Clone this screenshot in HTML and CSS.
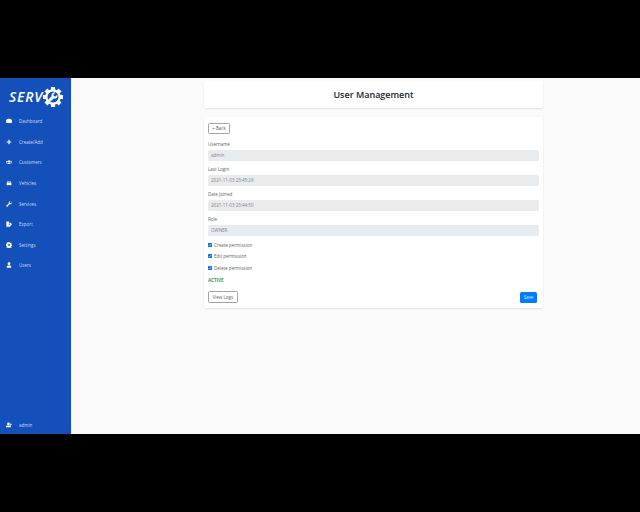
FILE: index.html
```html
<!DOCTYPE html>
<html lang="en">
<head>
<meta charset="utf-8">
<title>User Management</title>
<link rel="stylesheet" href="styles.css">
</head>
<body>
<div class="app">
  <aside class="sidebar">
    <div class="logo">
      <span class="logo-text">SERV</span>
      <svg class="logo-gear" viewBox="0 0 24 24" width="20" height="20">
        <g fill="#fff">
          <rect x="9.500" y="0" width="5" height="5"/>
          <rect x="9.500" y="0" width="5" height="5" transform="rotate(45 12 12)"/>
          <rect x="9.500" y="0" width="5" height="5" transform="rotate(90 12 12)"/>
          <rect x="9.500" y="0" width="5" height="5" transform="rotate(135 12 12)"/>
          <rect x="9.500" y="0" width="5" height="5" transform="rotate(180 12 12)"/>
          <rect x="9.500" y="0" width="5" height="5" transform="rotate(225 12 12)"/>
          <rect x="9.500" y="0" width="5" height="5" transform="rotate(270 12 12)"/>
          <rect x="9.500" y="0" width="5" height="5" transform="rotate(315 12 12)"/>
        </g>
        <circle cx="12" cy="12" r="8" fill="none" stroke="#fff" stroke-width="2.600"/>
        <path fill="#fff" d="M15 6.600a3.700 3.700 0 0 0-4.700 4.600L6.500 15a1.700 1.700 0 0 0 2.500 2.500l3.800-3.800a3.700 3.700 0 0 0 4.600-4.700L15 11.400l-2-.5-.5-2z"/>
      </svg>
    </div>
    <nav class="nav">
      <a class="nav-item"><svg class="ico" viewBox="0 0 16 16"><path d="M8 2a7.500 7.500 0 0 0-8 7.500c0 1.500.4 3 1 4h14c.6-1 1-2.500 1-4A7.500 7.500 0 0 0 8 2z"/></svg><span>Dashboard</span></a>
      <a class="nav-item"><svg class="ico" viewBox="0 0 16 16"><path d="M6.500 2h3v4.500H14v3H9.500V14h-3V9.500H2v-3h4.500z"/></svg><span>Create/Add</span></a>
      <a class="nav-item"><svg class="ico" viewBox="0 0 16 16"><circle cx="8" cy="6" r="2.800"/><circle cx="2.800" cy="6.500" r="2"/><circle cx="13.200" cy="6.500" r="2"/><path d="M3.500 13.500c0-3 2-4.500 4.500-4.500s4.500 1.500 4.500 4.500zM0 11c0-1.500 1-2.500 2.500-2.500.5 0 1 .1 1.300.3C2.800 9.500 2.300 10.500 2.200 11.500H0zM16 11c0-1.500-1-2.500-2.500-2.500-.5 0-1 .1-1.300.3 1 .7 1.500 1.700 1.600 2.700H16z"/></svg><span>Customers</span></a>
      <a class="nav-item"><svg class="ico" viewBox="0 0 16 16"><path d="M4 2.500h8l1.500 4.500.8.700V13h-2.600v1.500h-1.400V13H5.700v1.500H4.300V13H1.700V7.700l.8-.7zM4.800 4 4 6.800h8L11.200 4z"/></svg><span>Vehicles</span></a>
      <a class="nav-item"><svg class="ico" viewBox="0 0 16 16"><path d="M15.500 4.500a4.500 4.500 0 0 1-6 4.200L4 14.500a1.800 1.800 0 0 1-2.600-2.600l5.700-5.500A4.500 4.500 0 0 1 12 .6L9.500 3.200l.6 2.300 2.300.6L15 3.500z"/></svg><span>Services</span></a>
      <a class="nav-item"><svg class="ico" viewBox="0 0 16 16"><path d="M1 1h7v4h3.500v2.500H6.500v2h5V15H1zM11.500 5.500V3.500L16 8.500l-4.500 4.500v-2.500z"/></svg><span>Export</span></a>
      <a class="nav-item"><svg class="ico" viewBox="0 0 16 16"><path fill-rule="evenodd" d="M6.500 0h3l.4 2 1.300.6 1.800-1 2 2.200-1 1.800.5 1.200 2 .5v2.900l-2 .5-.5 1.200 1 1.800-2 2.200-1.800-1-1.300.5-.4 2h-3l-.4-2-1.300-.5-1.800 1-2-2.200 1-1.800-.5-1.200-2-.5V6.300l2-.5.5-1.200-1-1.800 2-2.200 1.800 1 1.300-.6zM8 5.300a2.500 2.500 0 1 0 0 5 2.500 2.500 0 0 0 0-5z"/></svg><span>Settings</span></a>
      <a class="nav-item"><svg class="ico" viewBox="0 0 16 16"><circle cx="8" cy="4.500" r="3.800"/><path d="M2 15v-2c0-2.500 2-4 4-4h4c2 0 4 1.500 4 4v2z"/></svg><span>Users</span></a>
    </nav>
    <a class="nav-item account"><svg class="ico" viewBox="0 0 16 16"><circle cx="6.500" cy="5" r="3.500"/><path d="M0 14v-1.500C0 10 2 9 4 9h5c2 0 4 1 4 3.500V14zM12 3.500h1.500V6H16v1.500h-2.500V10H12V7.500H9.500V6H12z"/></svg><span>admin</span></a>
  </aside>
  <main class="main">
    <header class="card title-card"><h1>User Management</h1></header>
    <section class="card form-card">
      <button class="btn btn-outline back" type="button"><span class="arrow">←</span>Back</button>
      <div class="field"><label>Username</label><div class="input">admin</div></div>
      <div class="field"><label>Last Login</label><div class="input">2021-11-03 23:45:29</div></div>
      <div class="field"><label>Date Joined</label><div class="input">2021-11-03 23:44:50</div></div>
      <div class="field"><label>Role</label><div class="input">OWNER</div></div>
      <div class="checks">
        <label class="check"><span class="box"><svg viewBox="0 0 8 8"><path d="M1.500 4.200 3.200 6l3.300-4" fill="none" stroke="#fff" stroke-width="1.200"/></svg></span>Create permission</label>
        <label class="check"><span class="box"><svg viewBox="0 0 8 8"><path d="M1.500 4.200 3.200 6l3.300-4" fill="none" stroke="#fff" stroke-width="1.200"/></svg></span>Edit permission</label>
        <label class="check"><span class="box"><svg viewBox="0 0 8 8"><path d="M1.500 4.200 3.200 6l3.300-4" fill="none" stroke="#fff" stroke-width="1.200"/></svg></span>Delete permission</label>
      </div>
      <div class="status">ACTIVE</div>
      <div class="actions">
        <button class="btn btn-outline logs" type="button">View Logs</button>
        <button class="btn btn-primary" type="button">Save</button>
      </div>
    </section>
  </main>
</div>
</body>
</html>
```
FILE: styles.css
```css
* { box-sizing: border-box; }
html, body { margin: 0; height: 100%; }
body {
  background: #000;
  font-family: "Open Sans", "Noto Sans", sans-serif;
  padding-top: 78px;
}
.app {
  display: flex;
  height: 356px;
  background: #fafafa;
}
.sidebar {
  width: 71px;
  flex: none;
  background: #1450b9;
  display: flex;
  flex-direction: column;
  color: #fff;
  padding-bottom: 4px;
}
.logo {
  height: 31px;
  margin-top: 3px;
  margin-bottom: 3px;
  padding-left: 9px;
  display: flex;
  align-items: center;
}
.logo-text {
  font-family: "Open Sans", sans-serif;
  font-style: italic;
  font-size: 14px;
  line-height: 1;
  letter-spacing: 0.800px;
  font-weight: 600;
}
.logo-gear { flex: none; overflow: visible; }
.nav {
  display: flex;
  flex-direction: column;
  margin-top: .500px;
  gap: 9.650px;
  flex: 1;
}
.nav-item {
  height: 11px;
  padding-left: 6px;
  display: flex;
  align-items: center;
  font-size: 4.500px;
  color: #cfdcf2;
}
.ico {
  width: 6px;
  height: 6px;
  fill: #fff;
  margin-right: 7px;
  flex: none;
}
.main {
  flex: 1;
  padding: 3px 97px 0 132px;
  border-left: 1px solid #e4ecf7;
}
.card {
  background: #fff;
  border-radius: 2px;
  box-shadow: 0 1px 2px rgba(0, 0, 0, .1);
}
.title-card {
  height: 27px;
  padding-bottom: 1px;
  display: flex;
  align-items: center;
  justify-content: center;
}
h1 {
  margin: 0;
  font-size: 9px;
  font-weight: 600;
  color: #212529;
  line-height: 1;
}
.form-card {
  margin-top: 9px;
  height: 191px;
  padding: 6px 4px 5px;
  display: flex;
  flex-direction: column;
}
.btn {
  font-family: inherit;
  font-size: 4.500px;
  line-height: 1;
  border-radius: 1.500px;
  padding: 0;
  display: block;
}
.btn-outline {
  background: #fff;
  color: #5c636a;
  border: 1px solid #a3a3a3;
}
.btn-primary {
  background: #007bff;
  color: #dcebff;
  border: 0;
  width: 17px;
  height: 11px;
  margin-right: 2px;
}
.back { width: 22px; height: 11px; }
.arrow { font-family: "DejaVu Sans", sans-serif; }
.field {
  margin-top: 7.500px;
  display: flex;
  flex-direction: column;
  gap: 3px;
}
.field + .field { margin-top: 5px; }
.field label {
  display: block;
  height: 6px;
  line-height: 6px;
  font-size: 4.500px;
  color: #5c636a;
}
.input {
  height: 11px;
  line-height: 11px;
  padding-left: 3px;
  background: #e9ecef;
  border-radius: 1.500px;
  font-size: 4.500px;
  color: #7a828a;
}
.checks {
  display: flex;
  flex-direction: column;
  gap: 5.700px;
  margin-top: 5.500px;
}
.check {
  display: flex;
  align-items: center;
  height: 6px;
  font-size: 4.500px;
  color: #5c636a;
}
.box {
  width: 4px;
  height: 4px;
  margin-right: 2px;
  background: #0f6fe0;
  border-radius: .500px;
  display: flex;
}
.box svg { width: 4px; height: 4px; }
.status {
  margin-top: 6px;
  height: 6px;
  line-height: 6px;
  font-size: 4.500px;
  font-weight: 700;
  color: #3a9a52;
}
.actions {
  margin-top: 8px;
  display: flex;
  justify-content: space-between;
  align-items: flex-end;
}
.logs { width: 29.500px; height: 12px; }
```
